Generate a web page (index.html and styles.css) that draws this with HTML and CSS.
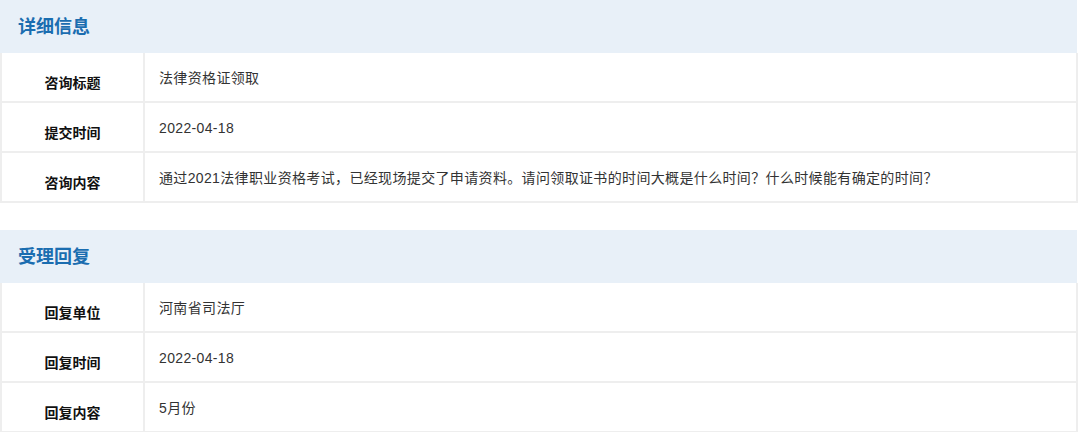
FILE: index.html
```html
<!DOCTYPE html>
<html lang="zh">
<head>
<meta charset="utf-8">
<link rel="stylesheet" href="styles.css">
</head>
<body>
<div class="page">
  <section class="section">
    <div class="sec-head">详细信息</div>
    <div class="table">
      <div class="row"><div class="label">咨询标题</div><div class="value">法律资格证领取</div></div>
      <div class="row"><div class="label">提交时间</div><div class="value">2022-04-18</div></div>
      <div class="row"><div class="label">咨询内容</div><div class="value">通过2021法律职业资格考试，已经现场提交了申请资料。请问领取证书的时间大概是什么时间？什么时候能有确定的时间？</div></div>
    </div>
  </section>
  <section class="section second">
    <div class="sec-head">受理回复</div>
    <div class="table">
      <div class="row"><div class="label">回复单位</div><div class="value">河南省司法厅</div></div>
      <div class="row"><div class="label">回复时间</div><div class="value">2022-04-18</div></div>
      <div class="row"><div class="label">回复内容</div><div class="value">5月份</div></div>
    </div>
  </section>
</div>
</body>
</html>
```
FILE: styles.css
```css
html, body {
  margin: 0;
  padding: 0;
  background: #fff;
}
.page {
  width: 1078px;
  font-family: "Liberation Sans", "Noto Sans CJK SC", sans-serif;
}
.section.second {
  margin-top: 27px;
}
.sec-head {
  height: 51px;
  line-height: 51px;
  padding-top: 2px;
  background: #e8f0f8;
  color: #1a6db0;
  font-size: 18px;
  font-weight: bold;
  padding-left: 18px;
  width: 1059px;
}
.table {
  border-left: 2px solid #eeeeee;
  border-right: 2px solid #eeeeee;
  width: 1074px;
}
.row {
  display: grid;
  grid-template-columns: 143px 1fr;
  height: 48px;
  border-bottom: 2px solid #eeeeee;
}
.label {
  border-right: 2px solid #eeeeee;
  text-align: center;
  font-size: 14px;
  font-weight: bold;
  color: #111;
  line-height: 20px;
  padding-top: 20px;
}
.value {
  font-size: 14px;
  color: #333;
  line-height: 20px;
  padding-top: 15px;
  padding-left: 14px;
  letter-spacing: 0.35px;
}
```
